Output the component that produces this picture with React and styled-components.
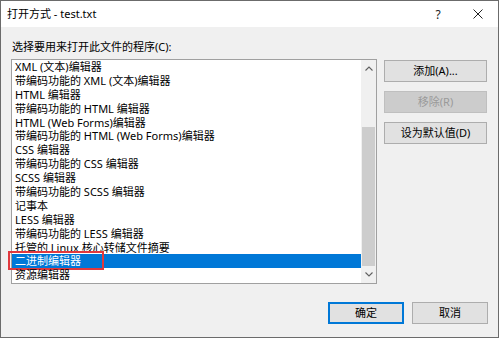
import React from "react";
import styled, { createGlobalStyle } from "styled-components";

const GlobalStyle = createGlobalStyle`
  html, body {
    margin: 0;
    padding: 0;
    background: #ffffff;
  }
  * {
    box-sizing: border-box;
  }
`;

const Window = styled.div`
  width: 499px;
  height: 338px;
  border: 1px solid #6b6b6b;
  display: flex;
  flex-direction: column;
  font-family: "Noto Sans", "Noto Sans CJK SC", sans-serif;
  font-size: 11px;
  color: #000;
  overflow: hidden;
`;

const TitleBar = styled.div`
  height: 26px;
  background: #ffffff;
  display: flex;
  align-items: center;
  padding-left: 6px;
`;

const Title = styled.div`
  flex: 1;
  line-height: 14px;
`;

const TitleButton = styled.div`
  width: ${({ w }) => w}px;
  height: 26px;
  display: flex;
  align-items: center;
  justify-content: center;
  color: #222;
  font-size: 12px;
`;

const Body = styled.div`
  flex: 1;
  background: #f0f0f0;
  padding: 13px 10px 13px 10px;
  display: flex;
  flex-direction: column;
`;

const Label = styled.div`
  line-height: 14px;
  height: 14px;
  margin-bottom: 5px;
  padding-left: 1px;
`;

const Main = styled.div`
  display: flex;
  gap: 7px;
  height: 225px;
`;

const ListBox = styled.div`
  width: 366px;
  height: 100%;
  border: 1px solid #a0a0a0;
  background: #ffffff;
  display: flex;
`;

const Items = styled.ul`
  list-style: none;
  margin: 0;
  padding: 0;
  flex: 1;
  overflow: visible;
`;

const Item = styled.li`
  position: relative;
  height: 13.9px;
  line-height: 13.9px;
  padding-left: 3px;
  white-space: nowrap;
  background: ${({ selected }) => (selected ? "#0078d7" : "transparent")};
  color: ${({ selected }) => (selected ? "#ffffff" : "#000000")};
`;

const Highlight = styled.span`
  position: absolute;
  left: -4px;
  top: -3.6px;
  width: 96px;
  height: 19px;
  border: 2px solid #e0393e;
  pointer-events: none;
`;

const ScrollBar = styled.div`
  width: 15px;
  background: #f0f0f0;
  display: flex;
  flex-direction: column;
`;

const ArrowButton = styled.div`
  height: 17px;
  display: flex;
  align-items: center;
  justify-content: center;
`;

const Track = styled.div`
  flex: 1;
  display: flex;
  flex-direction: column;
  padding: 50px 1px 0 1px;
`;

const Thumb = styled.div`
  flex: 1;
  background: #cdcdcd;
`;

const SideButtons = styled.div`
  display: flex;
  flex-direction: column;
  gap: 9px;
  padding-top: 1px;
`;

const Button = styled.button`
  width: ${({ w }) => w}px;
  height: 22px;
  padding: 0;
  font: inherit;
  line-height: 14px;
  background: ${({ disabled }) => (disabled ? "#cccccc" : "#e1e1e1")};
  color: ${({ disabled }) => (disabled ? "#9a9a9a" : "#000000")};
  border: 1px solid
    ${({ disabled, primary }) =>
      disabled ? "#bfbfbf" : primary ? "#0078d7" : "#adadad"};
  box-shadow: ${({ primary }) => (primary ? "inset 0 0 0 1px #0078d7" : "none")};
`;

const Footer = styled.div`
  margin-top: 18px;
  display: flex;
  justify-content: flex-end;
  gap: 8px;
`;

const Chevron = ({ up }) => (
  <svg width="8" height="5" viewBox="0 0 8 5">
    <path
      d={up ? "M0.5 4.5 L4 1 L7.5 4.5" : "M0.5 0.5 L4 4 L7.5 0.5"}
      fill="none"
      stroke="#606060"
      strokeWidth="1.1"
    />
  </svg>
);

const CloseIcon = () => (
  <svg width="10" height="10" viewBox="0 0 10 10">
    <path d="M0.5 0.5 L9.5 9.5 M9.5 0.5 L0.5 9.5" stroke="#222" strokeWidth="1" />
  </svg>
);

const programs = [
  "XML (文本)编辑器",
  "带编码功能的 XML (文本)编辑器",
  "HTML 编辑器",
  "带编码功能的 HTML 编辑器",
  "HTML (Web Forms)编辑器",
  "带编码功能的 HTML (Web Forms)编辑器",
  "CSS 编辑器",
  "带编码功能的 CSS 编辑器",
  "SCSS 编辑器",
  "带编码功能的 SCSS 编辑器",
  "记事本",
  "LESS 编辑器",
  "带编码功能的 LESS 编辑器",
  "托管的 Linux 核心转储文件摘要",
  "二进制编辑器",
  "资源编辑器",
];

const SELECTED = 14;

const App = () => {
  return (
    <>
      <GlobalStyle />
      <Window>
        <TitleBar>
          <Title>打开方式 - test.txt</Title>
          <TitleButton w={30}>?</TitleButton>
          <TitleButton w={5} />
          <TitleButton w={40}>
            <CloseIcon />
          </TitleButton>
        </TitleBar>
        <Body>
          <Label>选择要用来打开此文件的程序(C):</Label>
          <Main>
            <ListBox>
              <Items>
                {programs.map((name, i) => (
                  <Item key={name} selected={i === SELECTED}>
                    {name}
                    {i === SELECTED ? <Highlight /> : null}
                  </Item>
                ))}
              </Items>
              <ScrollBar>
                <ArrowButton>
                  <Chevron up />
                </ArrowButton>
                <Track>
                  <Thumb />
                </Track>
                <ArrowButton>
                  <Chevron />
                </ArrowButton>
              </ScrollBar>
            </ListBox>
            <SideButtons>
              <Button w={103}>添加(A)...</Button>
              <Button w={103} disabled>
                移除(R)
              </Button>
              <Button w={103}>设为默认值(D)</Button>
            </SideButtons>
          </Main>
          <Footer>
            <Button w={76} primary>
              确定
            </Button>
            <Button w={76}>取消</Button>
          </Footer>
        </Body>
      </Window>
    </>
  );
};

export default App;
